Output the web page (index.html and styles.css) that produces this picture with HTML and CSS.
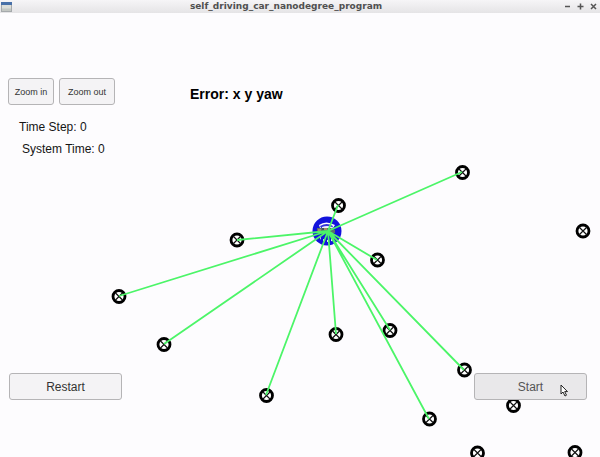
FILE: index.html
```html
<!DOCTYPE html>
<html lang="en">
<head>
<meta charset="utf-8">
<title>self_driving_car_nanodegree_program</title>
<link rel="stylesheet" href="styles.css">
</head>
<body>
<header class="titlebar">
  <svg class="app-icon" viewBox="0 0 11 10" aria-hidden="true">
    <rect x="0.5" y="0.5" width="10" height="9" fill="#dcded9" stroke="#a5a9ac"/>
    <rect width="11" height="3" fill="#4870a8"/>
    <path d="M1 6.500h9v2.500h-9z" fill="#c3c7c3"/>
  </svg>
  <h1 class="title">self_driving_car_nanodegree_program</h1>
  <div class="window-controls">
    <button class="window-button" aria-label="Minimize"><svg viewBox="0 0 7 7"><path d="M1 3.500h5"/></svg></button>
    <button class="window-button" aria-label="Maximize"><svg viewBox="0 0 7 7"><path d="M.5 3.500h6M3.500 .5v6"/></svg></button>
    <button class="window-button" aria-label="Close"><svg viewBox="0 0 7 7"><path d="M1 1l5 5M6 1l-5 5"/></svg></button>
  </div>
</header>
<main class="simulator">
  <svg class="map" viewBox="0 0 600 444" preserveAspectRatio="xMidYMid slice" aria-hidden="true">
    <defs>
      <g id="landmark">
        <circle r="6" fill="#fff" stroke="#000" stroke-width="2.800"/>
        <path d="M-3.500 -3.500L3.500 3.500M3.500 -3.500L-3.500 3.500" stroke="#111" stroke-width="1.200"/>
      </g>
    </defs>
    <use href="#landmark" x="462.500" y="159.500"/>
    <use href="#landmark" x="338.500" y="192.500"/>
    <use href="#landmark" x="237" y="227"/>
    <use href="#landmark" x="377.500" y="247"/>
    <use href="#landmark" x="583" y="218"/>
    <use href="#landmark" x="119" y="283.500"/>
    <use href="#landmark" x="164" y="331.500"/>
    <use href="#landmark" x="336" y="321.500"/>
    <use href="#landmark" x="390" y="317.500"/>
    <use href="#landmark" x="464.500" y="357"/>
    <use href="#landmark" x="266.500" y="382.500"/>
    <use href="#landmark" x="429.500" y="406"/>
    <use href="#landmark" x="513.500" y="392.500"/>
    <use href="#landmark" x="477.500" y="440"/>
    <use href="#landmark" x="575" y="439.500"/>
    <circle cx="327" cy="218" r="14.500" fill="#1212dc"/>
    <path d="M319 212q7-5 16 0l-2 3h-13z" fill="#fff"/>
    <path d="M320 213q7-4 13 0l-1 2h-11z" fill="#3333d8"/>
    <path d="M322 214q5-2 10 0v2h-10z" fill="#eef"/>
    <path d="M317 215h14l4 2v3h-18z" fill="#58716d"/>
    <path d="M318 216h3v3h-3zM324 215h3v2h-3z" fill="#a58b6b"/>
    <path d="M322 216h2M328 217h3M321 220h4" stroke="#243b44"/>
    <path d="M319 223q8 8 16 0l-1 4q-7 4-13 0z" fill="#eef"/>
    <path d="M322 224v5M326 225v5M330 225v5M333 223l2 4" stroke="#1212dc" stroke-width="2"/>
    <path class="beams" d="M328 218L462 159M328 218L338 192M328 218L237 227M328 218L377 247M328 218L119 283M328 218L164 331M328 218L336 321M328 218L390 317M328 218L464 357M328 218L266 382M328 218L429 406"/>
  </svg>
  <section class="hud">
    <div class="side">
      <div class="zoom">
        <button class="button small">Zoom in</button>
        <button class="button small wide">Zoom out</button>
      </div>
      <p class="stat step">Time Step: 0</p>
      <p class="stat clock">System Time: 0</p>
    </div>
    <h2 class="error">Error: x y yaw</h2>
  </section>
  <footer class="actions">
    <button class="button large">Restart</button>
    <button class="button large active">Start
      <svg class="cursor" viewBox="0 0 8 13" aria-hidden="true"><path d="M1 1v9l2-2 2 4 1.500-.8-1.800-3.600H7.500z" fill="#fff" stroke="#222"/></svg>
    </button>
  </footer>
</main>
</body>
</html>
```
FILE: styles.css
```css
* {
  box-sizing: border-box;
}

body {
  display: flex;
  flex-direction: column;
  min-height: 100vh;
  margin: 0;
  background: #fdfcfe;
  color: #151515;
  font-family: "Liberation Sans", Arial, sans-serif;
}

h1, h2, p {
  margin: 0;
}

.titlebar {
  display: grid;
  grid-template-columns: 40px 1fr 40px;
  align-items: center;
  height: 13px;
  padding: 0 3px 0 1px;
  background: linear-gradient(#f6f5f7, #e5e4e6);
}

.app-icon {
  width: 11px;
  height: 10px;
}

.title {
  padding-right: 26px;
  color: #505050;
  font: bold 9px/11px "DejaVu Sans", sans-serif;
  text-align: center;
}

.window-controls {
  display: flex;
  justify-content: flex-end;
  gap: 6px;
}

.window-button {
  display: flex;
  padding: 0;
  border: 0;
  background: none;
}

.window-button svg {
  width: 7px;
  height: 7px;
  fill: none;
  stroke: #555;
  stroke-width: 1.5;
}

.simulator {
  position: relative;
  display: flex;
  flex: 1;
  flex-direction: column;
  justify-content: space-between;
  overflow: hidden;
}

.map {
  position: absolute;
  inset: 0;
  width: 100%;
  height: 100%;
}

.beams {
  fill: none;
  stroke: #4cf568;
  stroke-width: 1.8;
}

.hud {
  position: relative;
  display: flex;
  gap: 75px;
  padding: 65px 8px 0;
}

.zoom {
  display: flex;
  gap: 5px;
  margin-bottom: 14px;
}

.button {
  height: 27px;
  padding: 0;
  border: 1px solid #b5b4b6;
  border-radius: 3px;
  background: #f4f3f5;
  color: #333;
  font-family: inherit;
  white-space: nowrap;
}

.small {
  width: 46px;
  font-size: 9px;
}

.wide {
  width: 56px;
}

.stat {
  font-size: 12px;
  line-height: 16px;
}

.step {
  margin: 0 0 6px 11px;
}

.clock {
  margin-left: 14px;
}

.error {
  padding-top: 7px;
  color: #000;
  font-size: 14px;
  line-height: 18px;
}

.actions {
  position: relative;
  display: flex;
  justify-content: space-between;
  padding: 0 13px 57px 9px;
}

.large {
  position: relative;
  width: 113px;
  font-size: 12px;
}

.active {
  background: #e9e8ea;
  color: #555;
}

.cursor {
  position: absolute;
  top: 10px;
  right: 18px;
  width: 8px;
  height: 13px;
}
```
